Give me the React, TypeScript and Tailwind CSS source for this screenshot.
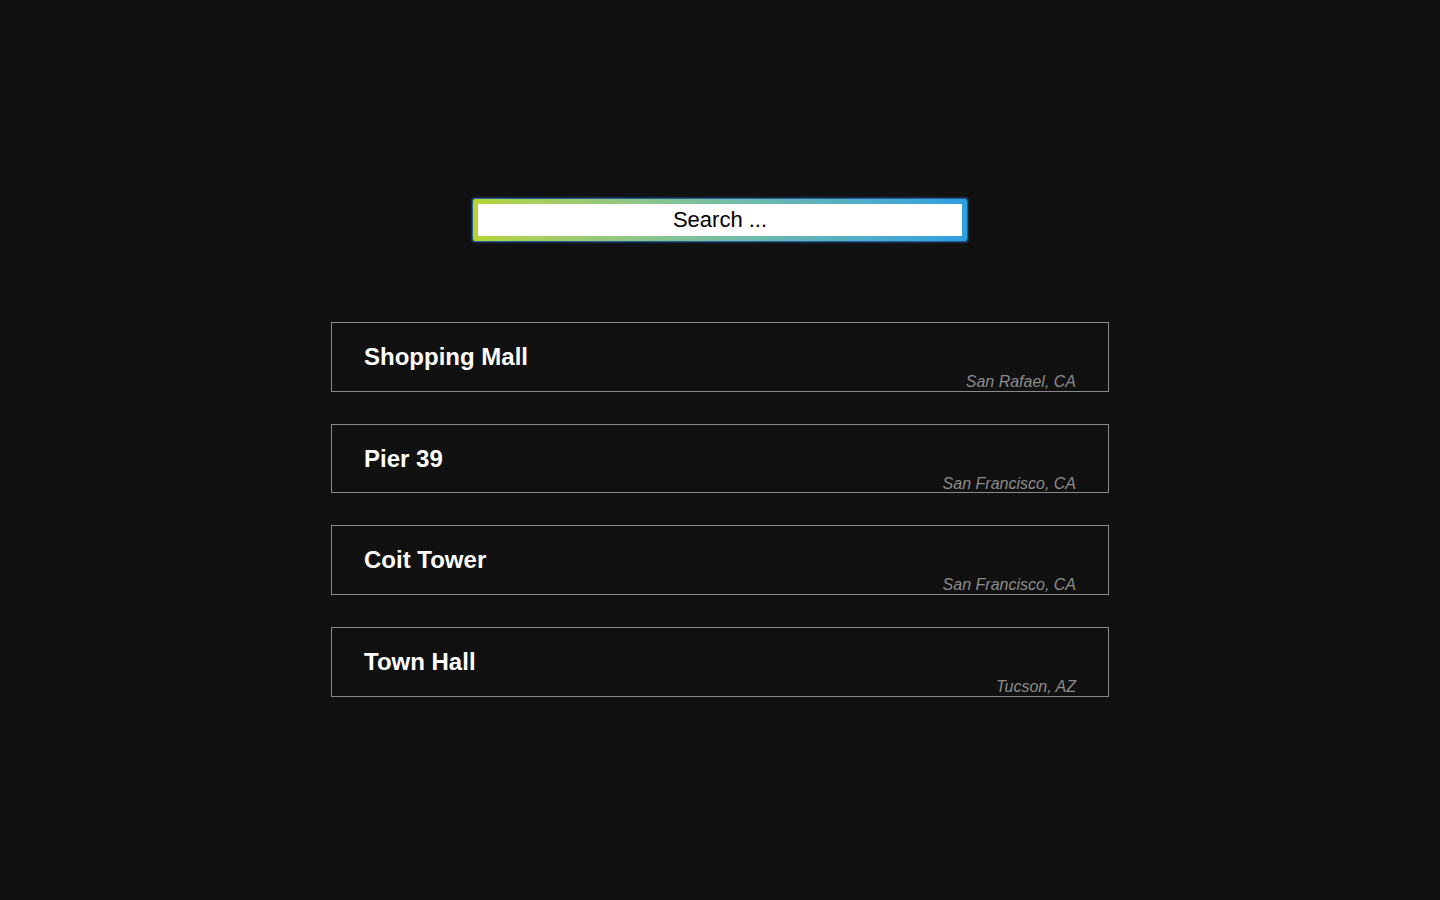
import { useState } from "react";

const places = [
    { name: "Shopping Mall", location: "San Rafael, CA" },
    { name: "Pier 39", location: "San Francisco, CA" },
    { name: "Coit Tower", location: "San Francisco, CA" },
    { name: "Town Hall", location: "Tucson, AZ" },
];

export default function App() {
    const [query, setQuery] = useState("");

    return (
        <div className="min-h-screen w-full bg-[#111111] font-['Liberation_Sans',Arial,sans-serif]">
            <div className="flex flex-col items-center pt-[199px]">
                <div className="w-[494px] h-[42px] p-[5px] rounded-[2px] bg-gradient-to-r from-[#b6d42f] to-[#2c9fe2] shadow-[0_0_2px_1px_#2a78c8]">
                    <input
                        autoFocus
                        value={query}
                        onChange={(e) => setQuery(e.target.value)}
                        placeholder="Search ..."
                        className="w-full h-full bg-white text-center text-[22px] text-black placeholder:text-black outline-none caret-black"
                    />
                </div>
            </div>
            <div className="flex flex-col items-center gap-8 mt-[81px]">
                {places.map((p) => (
                    <div
                        key={p.name}
                        className="w-[778px] h-[69.67px] border border-[#8a8a8a] px-8 flex flex-col"
                    >
                        <h2 className="pt-[20px] text-[24px] leading-[28px] font-bold text-white">
                            {p.name}
                        </h2>
                        <p className="text-right italic text-[16px] leading-[18px] text-[#8c8c8c] mt-[2px]">
                            {p.location}
                        </p>
                    </div>
                ))}
            </div>
        </div>
    );
}
